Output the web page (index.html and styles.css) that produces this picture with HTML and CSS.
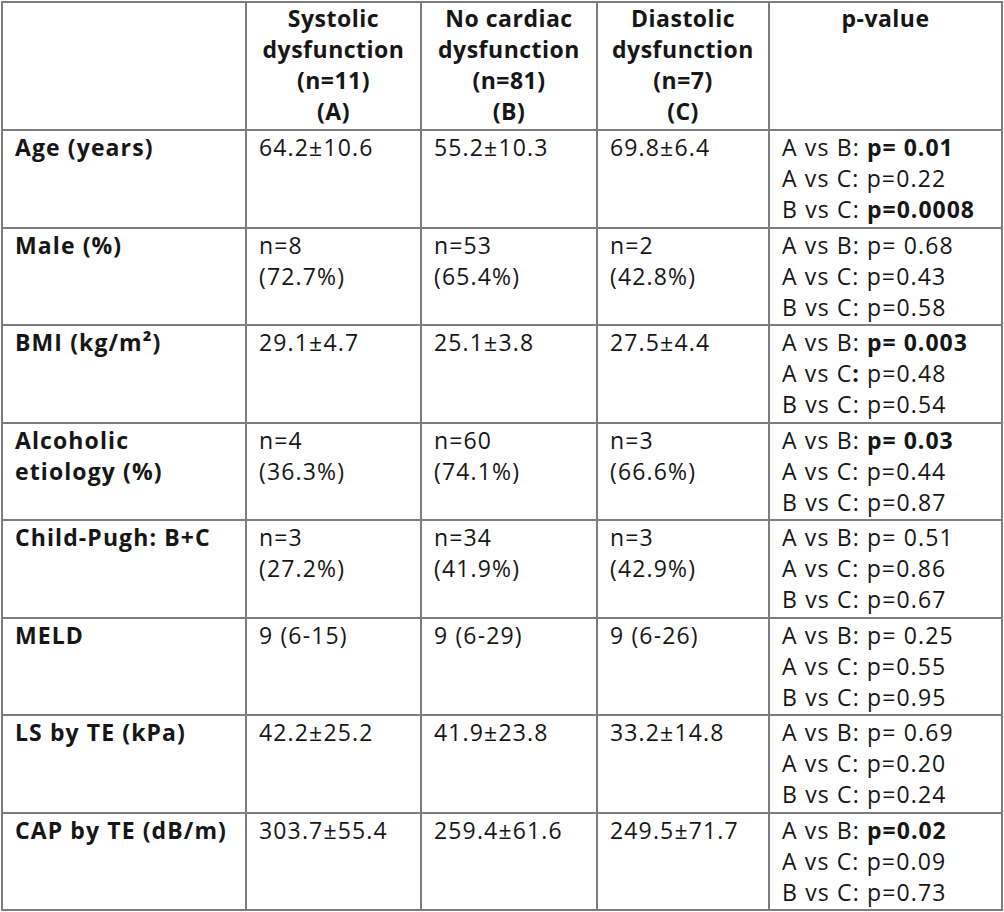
FILE: index.html
```html
<!DOCTYPE html>
<html>
<head>
<meta charset="utf-8">
<link rel="stylesheet" href="styles.css">
</head>
<body>
<table class="tbl">
  <colgroup>
    <col class="c1"><col class="c2"><col class="c3"><col class="c4"><col class="c5">
  </colgroup>
  <thead>
    <tr class="head">
      <th></th>
      <th>Systolic<br>dysfunction<br>(n=11)<br>(A)</th>
      <th>No cardiac<br>dysfunction<br>(n=81)<br>(B)</th>
      <th>Diastolic<br>dysfunction<br>(n=7)<br>(C)</th>
      <th>p-value</th>
    </tr>
  </thead>
  <tbody>
    <tr>
      <td class="lab">Age (years)</td>
      <td>64.2±10.6</td>
      <td>55.2±10.3</td>
      <td>69.8±6.4</td>
      <td>A vs B: <b>p= 0.01</b><br>A vs C: p=0.22<br>B vs C: <b>p=0.0008</b></td>
    </tr>
    <tr>
      <td class="lab">Male (%)</td>
      <td>n=8<br>(72.7%)</td>
      <td>n=53<br>(65.4%)</td>
      <td>n=2<br>(42.8%)</td>
      <td>A vs B: p= 0.68<br>A vs C: p=0.43<br>B vs C: p=0.58</td>
    </tr>
    <tr>
      <td class="lab">BMI (kg/m²)</td>
      <td>29.1±4.7</td>
      <td>25.1±3.8</td>
      <td>27.5±4.4</td>
      <td>A vs B: <b>p= 0.003</b><br>A vs C<b>:</b> p=0.48<br>B vs C: p=0.54</td>
    </tr>
    <tr>
      <td class="lab">Alcoholic<br>etiology (%)</td>
      <td>n=4<br>(36.3%)</td>
      <td>n=60<br>(74.1%)</td>
      <td>n=3<br>(66.6%)</td>
      <td>A vs B: <b>p= 0.03</b><br>A vs C: p=0.44<br>B vs C: p=0.87</td>
    </tr>
    <tr>
      <td class="lab">Child-Pugh: B+C</td>
      <td>n=3<br>(27.2%)</td>
      <td>n=34<br>(41.9%)</td>
      <td>n=3<br>(42.9%)</td>
      <td>A vs B: p= 0.51<br>A vs C: p=0.86<br>B vs C: p=0.67</td>
    </tr>
    <tr>
      <td class="lab">MELD</td>
      <td>9 (6-15)</td>
      <td>9 (6-29)</td>
      <td>9 (6-26)</td>
      <td>A vs B: p= 0.25<br>A vs C: p=0.55<br>B vs C: p=0.95</td>
    </tr>
    <tr>
      <td class="lab">LS by TE (kPa)</td>
      <td>42.2±25.2</td>
      <td>41.9±23.8</td>
      <td>33.2±14.8</td>
      <td>A vs B: p= 0.69<br>A vs C: p=0.20<br>B vs C: p=0.24</td>
    </tr>
    <tr>
      <td class="lab">CAP by TE (dB/m)</td>
      <td>303.7±55.4</td>
      <td>259.4±61.6</td>
      <td>249.5±71.7</td>
      <td>A vs B: <b>p=0.02</b><br>A vs C: p=0.09<br>B vs C: p=0.73</td>
    </tr>
  </tbody>
</table>
</body>
</html>
```

FILE: styles.css
```css
html, body {
  margin: 0;
  padding: 0;
  background: #ffffff;
}
body {
  padding: 1px 0 0 1px;
  font-family: "Open Sans", Lato, sans-serif;
  font-size: 23px;
  line-height: 31px;
  letter-spacing: 1.15px;
  color: #161616;
}
.tbl {
  border-collapse: separate;
  border-spacing: 0;
  table-layout: fixed;
  width: 1002px;
  border-left: 2px solid #7d7d7d;
  border-top: 2px solid #7d7d7d;
}
.c1 { width: 244px; }
.c2 { width: 175px; }
.c3 { width: 176px; }
.c4 { width: 172px; }
.c5 { width: 233px; }
.tbl th,
.tbl td {
  box-sizing: border-box;
  border-right: 2px solid #7d7d7d;
  border-bottom: 2px solid #7d7d7d;
  padding: 1px 0 0 12px;
  vertical-align: top;
  text-align: left;
  white-space: nowrap;
}
.tbl th {
  font-weight: 700;
  letter-spacing: 0.5px;
  text-align: center;
  padding: 0;
  height: 128px;
}
.tbl tbody tr {
  height: 97.5px;
}
.lab {
  font-weight: 700;
  letter-spacing: 1.1px;
}
b {
  font-weight: 700;
  letter-spacing: 1px;
}
```
